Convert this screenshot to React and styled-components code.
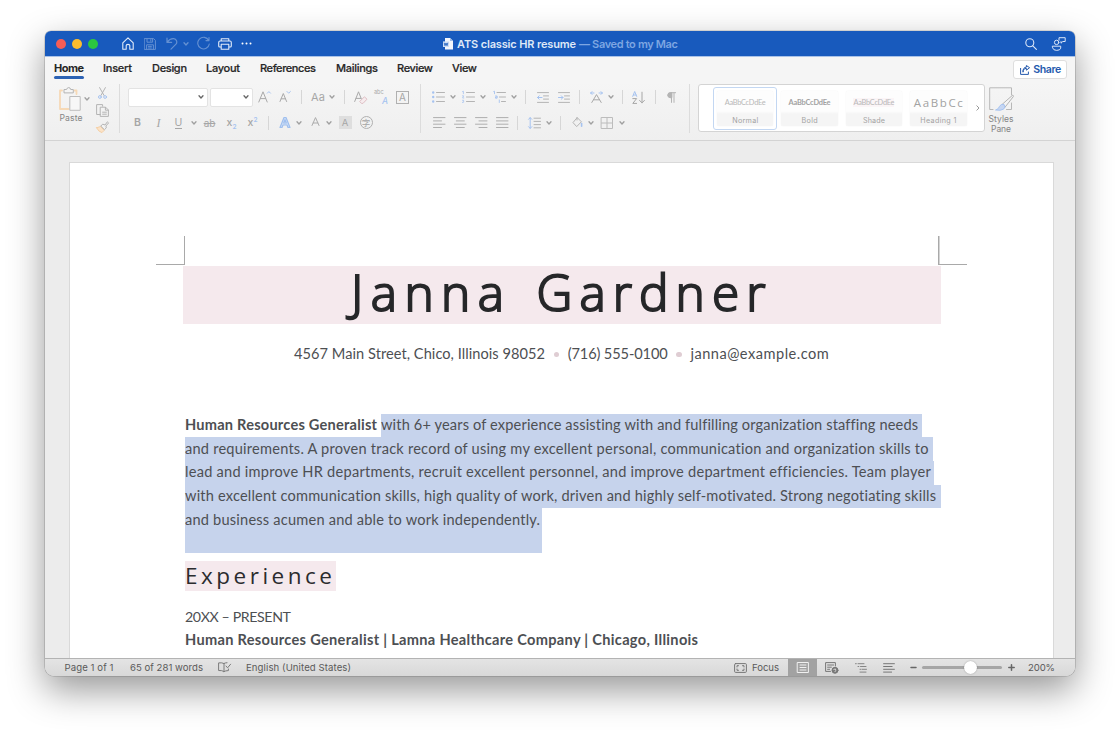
import React, { useLayoutEffect, useRef, useState } from "react";
import styled, { createGlobalStyle, css } from "styled-components";

const GRAY = "#b4b4b4";
const BLUE = "#a6c3f0";
const UI = `Inter, "Liberation Sans", sans-serif`;
const BODY = `Lato, "Liberation Sans", sans-serif`;
const HEAD = `"Open Sans", "Noto Sans", sans-serif`;

const Global = createGlobalStyle`
  *, *::before, *::after { box-sizing: border-box; }
  html, body { margin: 0; padding: 0; background: #fff; overflow: hidden; }
  svg { display: block; flex: none; overflow: visible; }
`;

/* ---------- text fitted to a column width by tracking ---------- */
const FitBox = styled.span`
  display: inline-block;
  flex: none;
  white-space: pre;
  width: ${(p) => p.$w}px;
`;

function Fit({ w, children }) {
  const ref = useRef(null);
  const [track, setTrack] = useState(0);
  useLayoutEffect(() => {
    const n = String(children).length;
    setTrack((w - ref.current.getBoundingClientRect().width) / Math.max(1, n - 1));
  }, [w, children]);
  return (
    <FitBox $w={w}>
      <span ref={ref} style={{ letterSpacing: track }}>{children}</span>
    </FitBox>
  );
}

/* ---------- window ---------- */
const Stage = styled.div`
  width: 1120px;
  height: 736px;
  padding: 31px 45px 60px;
  background: #fff;
  font-family: ${UI};
`;

const Window = styled.div`
  width: 1030px;
  height: 645px;
  display: flex;
  flex-direction: column;
  overflow: hidden;
  border-radius: 6px 6px 9px 9px;
  background: #ececec;
  box-shadow: 0 0 0 0.6px rgba(0, 0, 0, 0.22), 0 14px 36px rgba(0, 0, 0, 0.41);
`;

const TitleBar = styled.header`
  height: 25px;
  flex: none;
  display: flex;
  align-items: center;
  background: #185abd;
  color: #fff;
`;

const Lights = styled.div`
  display: flex;
  gap: 6px;
  margin-left: 10.5px;
`;

const Light = styled.i`
  width: 10px;
  height: 10px;
  border-radius: 50%;
  background: ${(p) => p.$c};
`;

const Slot = styled.span`
  flex: none;
  display: flex;
  align-items: center;
  justify-content: center;
  width: ${(p) => p.$w}px;
  margin-left: ${(p) => p.$ml || 0}px;
  ${(p) => p.$dim && css`opacity: 0.33;`}
`;

const DocTitle = styled.div`
  display: flex;
  align-items: center;
  margin-left: 191px;
  font-size: 11px;
  font-weight: 600;
  color: #dfe8f7;
  svg { margin-right: 4px; }
  em { font-style: normal; color: #7da6e2; margin-left: 3px; }
`;

/* ---------- ribbon ---------- */
const Tabs = styled.nav`
  height: 26px;
  flex: none;
  display: flex;
  align-items: flex-start;
  padding: 4px 8px 0 9px;
  background: #f5f5f5;
  border-top: 1px solid #a9c2e8;
`;

const Tab = styled.div`
  height: 18px;
  line-height: 15px;
  font-size: 11px;
  font-weight: ${(p) => (p.$on ? 700 : 500)};
  color: #262626;
  -webkit-text-stroke: ${(p) => (p.$on ? 0 : 0.2)}px #262626;
  margin-right: ${(p) => p.$mr}px;
  &::after {
    content: "";
    display: block;
    height: 2.5px;
    border-radius: 2px;
    background: ${(p) => (p.$on ? "#2c62b4" : "transparent")};
  }
`;

const ShareButton = styled.button`
  margin: -1px 0 0 auto;
  width: 54px;
  height: 19px;
  padding: 0 5px 0 6px;
  display: flex;
  align-items: center;
  justify-content: space-between;
  border: 1px solid #dedede;
  border-radius: 3px;
  background: #fff;
  color: #2459ad;
  font: 600 10.6px ${UI};
`;

const Ribbon = styled.section`
  height: 59px;
  flex: none;
  display: flex;
  background: linear-gradient(#f5f5f5, #efefef);
  border-bottom: 1px solid #d3d3d3;
`;

const Clipboard = styled.div`
  display: flex;
  width: 74px;
  padding: 5px 0 0 13px;
`;

const PasteStack = styled.div`
  width: 26px;
  display: flex;
  flex-direction: column;
  align-items: center;
  font-size: 8.6px;
  line-height: 11px;
  color: #858585;
  svg { margin: 0 2px 2px 0; }
`;

const ChevronHolder = styled.div`
  padding: 10px 0 0 0;
`;

const ToolStack = styled.div`
  display: flex;
  flex-direction: column;
  align-items: center;
  margin-left: 5px;
  width: 14px;
  gap: 4.5px;
`;

const GroupLine = styled.i`
  flex: none;
  width: 1px;
  height: 49px;
  margin-top: 2px;
  background: #dcdcdc;
`;

const Rows = styled.div`
  flex: none;
  width: ${(p) => p.$w}px;
  display: flex;
  flex-direction: column;
`;

const Row = styled.div`
  display: flex;
  align-items: center;
  height: ${(p) => p.$h}px;
`;

const Field = styled.div`
  flex: none;
  display: flex;
  align-items: center;
  justify-content: flex-end;
  width: ${(p) => p.$w}px;
  height: 19px;
  margin-left: ${(p) => p.$ml}px;
  padding-right: 3px;
  background: #fff;
  border: 1px solid #e3e3e3;
  border-radius: 2px;
`;

const Sep = styled.i`
  flex: none;
  width: 1px;
  height: 14px;
  margin-left: ${(p) => p.$ml}px;
  background: #d6d6d6;
`;

const Glyph = styled.span`
  font-family: ${(p) => p.$f || UI};
  font-size: ${(p) => p.$s || 12}px;
  font-weight: ${(p) => p.$b || 400};
  line-height: 14px;
  white-space: nowrap;
  color: ${(p) => p.$c || "#a6a6a6"};
  sub, sup { font-size: 6.5px; line-height: 0; color: ${BLUE}; font-weight: 600; }
`;

const Under = styled(Glyph)`
  border-bottom: 1px solid #a6a6a6;
  line-height: 11px;
`;

const Struck = styled(Glyph)`
  text-decoration: line-through;
`;

const Boxed = styled(Glyph)`
  width: 13px;
  height: 13px;
  line-height: 11px;
  text-align: center;
  border: 1px solid ${(p) => (p.$fill ? "transparent" : "#b0b0b0")};
  background: ${(p) => p.$fill || "transparent"};
  border-radius: ${(p) => (p.$round ? "50%" : 0)};
`;

const Gallery = styled.div`
  flex: none;
  display: flex;
  align-items: center;
  width: 287px;
  height: 48px;
  margin: 2px 0 0 8px;
  padding-left: 14px;
  background: #fff;
  border: 1px solid #d4d4d4;
  border-radius: 3px;
`;

const StyleTile = styled.div`
  flex: none;
  width: 64.4px;
  height: 43px;
  padding: 3px;
  border: 1px solid ${(p) => (p.$on ? "#c3d7f2" : "transparent")};
  border-radius: 3px;
`;

const StyleFace = styled.div`
  height: 35px;
  border-radius: 2px;
  display: flex;
  flex-direction: column;
  align-items: center;
  background: linear-gradient(#fdfdfd 0 20px, #f5f5f5 23px);
  box-shadow: 0 0 1px #e2e2e2;
  color: #a2a2a2;
`;

const Sample = styled.div`
  height: 22px;
  line-height: 23px;
  font-family: ${(p) => (p.$big ? HEAD : BODY)};
  font-size: ${(p) => (p.$big ? 11.5 : 7.4)}px;
  font-weight: ${(p) => (p.$bold ? 700 : 400)};
  color: ${(p) => (p.$faint ? "#b8b8b8" : "#a2a2a2")};
`;

const SampleMark = styled.span`
  background: ${(p) => (p.$on ? "#fbf5f7" : "transparent")};
`;

const StyleName = styled.div`
  font-size: 7.2px;
  line-height: 15px;
`;

const PaneButton = styled.div`
  width: 32px;
  padding-top: 5px;
  display: flex;
  flex-direction: column;
  align-items: center;
  font-size: 8.5px;
  line-height: 10px;
  color: #858585;
  text-align: center;
  svg { margin-bottom: 3px; }
`;

/* ---------- document ---------- */
const Desk = styled.main`
  flex: 1;
  min-height: 0;
  padding: 21px 21px 0 24px;
  overflow: hidden;
  background: #ececec;
`;

const Page = styled.article`
  height: 600px;
  padding: 73px 0 0 86px;
  background: #fff;
  border: 1px solid #d9d9d9;
  font-family: ${BODY};
  color: #4d4f53;
`;

const Marks = styled.div`
  display: flex;
  justify-content: space-between;
  width: 811px;
  height: 30px;
`;

const Mark = styled.i`
  width: 29px;
  height: 29px;
  background:
    linear-gradient(#a9a9a9, #a9a9a9) ${(p) => (p.$left ? "right" : "left")} / 1.5px 100% no-repeat,
    linear-gradient(#a9a9a9, #a9a9a9) bottom / 100% 1.5px no-repeat;
`;

const NameBand = styled.h1`
  display: flex;
  gap: 32.5px;
  width: 758px;
  height: 58px;
  margin: 0 0 0 26.5px;
  padding-left: 168.5px;
  background: #f5e9ed;
  color: #262729;
  font: 300 49.5px/53px ${HEAD};
  -webkit-text-stroke: 2px #262729;
  stroke-linejoin: round;
`;

const Contact = styled.div`
  display: flex;
  align-items: center;
  height: 22px;
  margin: 19px 0 0 138px;
  font-size: 14.6px;
  line-height: 22px;
`;

const Dot = styled.i`
  width: 5.5px;
  height: 5.5px;
  margin: 1px 8.6px 0 8.6px;
  border-radius: 50%;
  background: #dfcdd3;
`;

const Summary = styled.div`
  margin: 49px 0 0 29px;
  font-size: 14.6px;
`;

const Line = styled.div`
  display: flex;
  height: ${(p) => p.$h}px;
  line-height: ${(p) => p.$lh}px;
`;

const Strong = styled.b`
  width: 196px;
  font-weight: 700;
`;

const Marked = styled.span`
  width: ${(p) => p.$w}px;
  background: #c6d3ec;
`;

const SectionTitle = styled.h2`
  width: 151px;
  height: 30px;
  margin: 8px 0 0 29px;
  padding-left: 0;
  background: #f5e9ed;
  color: #2b2c2e;
  font: 400 22.5px/30px ${HEAD};
`;

const Entry = styled.p`
  margin: ${(p) => p.$mt}px 0 0 29px;
  height: ${(p) => (p.$bold ? 24 : 23)}px;
  font-size: ${(p) => (p.$bold ? 14.6 : 14.2)}px;
  line-height: 24px;
  font-weight: ${(p) => (p.$bold ? 700 : 400)};
`;

/* ---------- status bar ---------- */
const StatusBar = styled.footer`
  flex: none;
  height: 18px;
  display: flex;
  align-items: center;
  border-top: 1px solid #b3b3b3;
  background: linear-gradient(#e4e4e4, #d8d8d8);
  font-size: 9.6px;
  line-height: 17px;
  color: #5a5a5a;
`;

const StatusText = styled.span`
  margin-left: ${(p) => p.$ml}px;
`;

const ActiveView = styled.span`
  display: flex;
  align-items: center;
  justify-content: center;
  width: 29px;
  height: 17px;
  margin-left: 9px;
  background: #a2a2a2;
`;

const Track = styled.span`
  display: flex;
  align-items: center;
  width: 80px;
  height: 3px;
  margin-left: 5px;
  padding-left: 42px;
  border-radius: 2px;
  background: #a5a5a5;
`;

const Knob = styled.i`
  width: 13px;
  height: 13px;
  border-radius: 50%;
  background: #fff;
  box-shadow: 0 0 1.5px rgba(0, 0, 0, 0.35);
`;

/* ---------- icons ---------- */
const Ico = ({ w, h, c = GRAY, sw = 1, children }) => (
  <svg width={w} height={h} viewBox={`0 0 ${w} ${h}`} fill="none" stroke={c} strokeWidth={sw} strokeLinecap="round" strokeLinejoin="round">
    {children}
  </svg>
);
const Chev = ({ c = "#a0a0a0" }) => (
  <Ico w={6} h={4} c={c} sw={1.3}><path d="M1 .8 3 3 5 .8" /></Ico>
);
const Drop = ({ ml }) => <Slot $w={6} $ml={ml}><Chev /></Slot>;

const HomeIcon = () => <Ico w={12} h={13} c="#e3ecf9" sw={1.1}><path d="M.8 5.8 6 .8l5.2 5v6.4H7.8V8.6Q7.8 7.4 6 7.4T4.2 8.6v3.6H.8Z" /></Ico>;
const SaveIcon = () => <Ico w={12} h={12} c="#fff"><path d="M.6.6h9l1.8 1.8v9H.6ZM3 .8v3.4h5.6V.8M2.6 11.2V6.8h6.8v4.4M6.8 1.6v1.6M4.4 8.4h3M4.4 10h3" /></Ico>;
const UndoIcon = () => <Ico w={12} h={13} c="#fff" sw={1.2}><path d="M1 1v4.4h4.6M1.2 5.2C3 2.600 5 1.400 7.600 1.600c3 .4 4 3.600 2.400 5.600L5 12.200" /></Ico>;
const RedoIcon = () => <Ico w={13} h={13} c="#fff" sw={1.1}><path d="M9 3.600h3V.6M11.700 3.400A5.800 5.800 0 1 0 12.300 7" /></Ico>;
const PrintIcon = () => <Ico w={14} h={12} c="#e3ecf9" sw={1.100}><path d="M3.200 3V.7h7.600V3M3 9H1.800Q.7 9 .7 8V4.400Q.7 3 2 3h10q1.300 0 1.300 1.400V8q0 1-1.100 1H11M3.200 6.200h7.600v5.100H3.200Z" /></Ico>;
const SearchIcon = () => <Ico w={12} h={12} c="#dbe6f8" sw={1.100}><circle cx="4.800" cy="4.800" r="4" /><path d="m7.800 7.800 3.600 3.600" /></Ico>;
const PeopleIcon = () => (
  <Ico w={14} h={14} c="#dbe6f8"><circle cx="4.600" cy="5.400" r="2.200" /><path d="M.7 9.200h8v2q-.6 2.200-4 2.200t-4-2.200ZM7 3.200V.7h6.200v3.800h-2.400L9 6.200V4.600" /></Ico>
);
const WordIcon = () => (
  <svg width="10" height="12" viewBox="0 0 10 12"><path d="M2 0h5l3 3v8.500H2Z" fill="#f2f6fc" /><path d="M7 0v3h3" fill="#9dbbe6" /><rect x="0" y="3.400" width="6" height="5.600" fill="#cfdff5" /><path d="m1.200 4.800.8 2.900 1-2.700 1 2.700.8-2.900" fill="none" stroke="#185abd" strokeWidth=".8" /></svg>
);
const ShareIcon = () => <Ico w={10} h={10} c="#2459ad"><path d="M.6 3.400v6h7.800V7M3 6.800C3 4.400 4.400 3.400 6.400 3.400V5.200L9.600 2.700 6.400.5v1.600C4 2.200 2.800 4 3 6.800Z" /></Ico>;

const PasteIcon = () => (
  <Ico w={22} h={24}>
    <path d="M3 3.500H1v18.500h8.500M15.500 3.500h2V7" stroke="#f6d9b6" strokeWidth="1.800" />
    <path d="M5 5.500v-3h2.600Q8 .6 9.700.6t2 1.900h2.600v3Z" fill="#f5f5f5" />
    <path d="M11.200 9.500h10v13.800h-10Z" fill="#f7f7f7" stroke="#bdbdbd" />
  </Ico>
);
const CutIcon = () => <Ico w={9} h={12}><path d="M1.600.6 6 8.400M7.400.6 3 8.400" /><circle cx="1.900" cy="10" r="1.400" stroke={BLUE} /><circle cx="7.100" cy="10" r="1.400" stroke={BLUE} /></Ico>;
const CopyIcon = () => <Ico w={13} h={13}><path d="M4.400 10.500H.6V.6h6v1.600M4.600 3.200h5l2.800 2.800v6.400H4.600ZM9.400 3.400v2.800h2.800M6.600 8.200h3.800M6.600 10.200h3.800" /></Ico>;
const BrushIcon = () => (
  <Ico w={13} h={12}><path d="m.6 6.800 4-1.300 3.600 3.800L6 11.600Q2.600 11 .6 6.800Z" fill="#fbe3c8" stroke="#f5d0a6" /><path d="m5 4.800 1.800-1.600L9 4l2.400-3.200 1.200 1.100L9.900 5l.4 1.900L8.700 8.400Z" fill="#f2f2f2" /></Ico>
);
const GrowIcon = ({ s, down }) => (
  <Ico w={13} h={14}><path d={s ? "M1 11.500 4.300 3.500l3.300 8M2.200 8.800h4.200" : "M.8 12 5 1.800 9.200 12M2.400 8.600h5.200"} stroke="#a9a9a9" /><path d={down ? "m8 1.500 1.700 1.700 1.700-1.700" : "m9.300 3.200 1.600-1.600 1.600 1.600"} stroke={BLUE} /></Ico>
);
const EraseIcon = () => <Ico w={14} h={13}><path d="M.7 10.500 4.500.8l2.900 7.200M2 7.400h4.600" stroke="#a9a9a9" /><path d="m6 10.200 4.400-4.400 2.600 2.400-4 4.200H7.800Z" stroke="#dfbfc4" fill="#f6ecee" /></Ico>;
const BulletIcon = () => (
  <Ico w={13} h={12}><path d="M4.500 1.500h8M4.500 6h8M4.500 10.500h8" /><path d="M1.200 1.500h.01M1.200 6h.01M1.200 10.500h.01" stroke={BLUE} strokeWidth="2.400" /></Ico>
);
const NumberIcon = () => (
  <Ico w={13} h={12}><path d="M4.500 1.500h8M4.500 6h8M4.500 10.500h8" /><path d="M.6.5l.8-.3v2.500M.5 4.800h1.200L.6 7h1.200M.5 9.300h1.200l-.6 1 .7.300-.5.900H.5" stroke={BLUE} strokeWidth=".8" /></Ico>
);
const MultiIcon = () => (
  <Ico w={13} h={12}><path d="M4 1.500h8.500M6.500 6h6M8.500 10.500h4" /><path d="M.7.5l.8-.3v2.500M2.500 5h1.600v2.200H2.500V6h1.400M6.300 9v2.500" stroke={BLUE} strokeWidth=".9" /></Ico>
);
const IndentIcon = ({ right }) => (
  <Ico w={12} h={11}><path d="M.5.6h11M6.500 3.900h5M6.500 7.100h5M.5 10.400h11" /><path d={right ? "M.5 5.500H5M3.300 3.800 5 5.500 3.300 7.200" : "M5 5.500H.5M2.200 3.800.5 5.500l1.700 1.700"} stroke={BLUE} /></Ico>
);
const DirIcon = () => <Ico w={13} h={12}><path d="M1.800 11.500 6.500 3.600l4.700 7.900M3.600 8.800h5.800" stroke="#a9a9a9" /><path d="M4 2H.6M2 .6.6 2 2 3.400M9 2h3.400M11 .6 12.400 2 11 3.400" stroke={BLUE} /></Ico>;
const SortIcon = () => (
  <Ico w={13} h={13}><path d="M.7 5.400 2.700.5l2 4.900M1.400 4h2.600" stroke={BLUE} /><path d="M.8 7.600h3.800L.8 12.400h3.800M10 1.200v10.600M7.600 9.400l2.400 2.500 2.400-2.500" stroke="#a6a6a6" /></Ico>
);
const PilcrowIcon = () => <Ico w={9} h={11}><path d="M4.500.8v9.600M7 .8v9.600M8.600.7H3.400a2.400 2.400 0 0 0 0 4.900h1" /><path d="M4.500.7H3.300a2.300 2.300 0 0 0 0 4.900h1.200Z" fill={GRAY} /></Ico>;
const AlignIcon = ({ kind }) => {
  const d = {
    left: "M.5.6h11.500M.5 3.900h8M.5 7.200h11.500M.5 10.500h8",
    center: "M.5.6H12M2.300 3.900h8M.5 7.200H12M2.300 10.500h8",
    right: "M.5.6H12M4 3.900h8M.5 7.200H12M4 10.500h8",
    full: "M.5.6H12M.5 3.900H12M.5 7.200H12M.5 10.500H12",
  }[kind];
  return <Ico w={12} h={11} c="#aeaeae"><path d={d} /></Ico>;
};
const SpacingIcon = () => <Ico w={13} h={12}><path d="M6 1.200h6.500M6 4.400h6.500M6 7.600h6.500M6 10.800h6.500" /><path d="M2.200.7v10.600M.6 2.300 2.200.6l1.600 1.700M.6 9.700l1.600 1.700 1.600-1.700" stroke={BLUE} /></Ico>;
const BucketIcon = () => <Ico w={11} h={11}><path d="M5 .8 1 5.600l3.700 4 4.700-4.800L5.600 1M5 3V.6" /><path d="M9.600 6.600v2.600" stroke={BLUE} strokeWidth="1.600" /></Ico>;
const BorderIcon = () => <Ico w={12} h={12} c="#bcbcbc"><path d="M.5.5h11v11H.5ZM6 .5v11M.5 6h11" /></Ico>;
const PaneIcon = () => (
  <Ico w={25} h={24}><path d="M4 22.500H.7V.8h21.800v7M22.500 16v6.500h-5" stroke="#b8b8b8" /><path d="M13 17.500 23.800 8l.6 1.500-8.600 11Z" fill="#f4f4f4" /><path d="M7 23q2.600-.8 3.500-3.600 1.500-3 4.600-1.800 2 2.600-.6 4.600-3 1.800-7.500.8Z" fill="#c6d6f2" stroke={BLUE} /></Ico>
);
const BookIcon = () => <Ico w={13} h={11} c="#7b7b7b"><path d="M6 1.500Q4 .4.600.9v7.600Q4 8.200 6 9.600V1.500Q7 .8 9 .7M6 9.600q1.500-1 4.400-1V7M8 4l1.600 1.800 3-3.600" /></Ico>;
const FocusIcon = () => <Ico w={13} h={10} c="#777"><rect x=".6" y=".6" width="11.800" height="8.800" rx="1" /><path d="M3 4V2.700h1.500M10 4V2.700H8.500M3 6v1.300h1.500M10 6v1.300H8.500" /></Ico>;
const PrintViewIcon = () => <Ico w={12} h={11} c="#f0f0f0"><rect x=".6" y=".5" width="10.800" height="10" /><path d="M3 3h6M3 5.500h6M3 8h6" /></Ico>;
const WebViewIcon = () => <Ico w={14} h={12} c="#777"><path d="M5.500 9.400H.6V.6h9.800V4M2.600 3h6M2.600 5.200h3.800M2.600 7.300h2" /><circle cx="10" cy="8.300" r="3" fill="#777" /><path d="M8.800 7.500l1.600-.6.400 1.400-.8 1.400" stroke="#ddd" strokeWidth=".9" /></Ico>;
const OutlineIcon = () => <Ico w={12} h={10} c="#858585"><path d="M.5.700h.8M3 .7h6M3 3.500h.8M5.500 3.500H11M5 6.300h.8M7 6.300h4.500M5 9.100h6" /></Ico>;
const DraftIcon = () => <Ico w={12} h={10} c="#777"><path d="M.6.700h10.800M.6 3.500h8.500M.6 6.300h10.800M.6 9.100h8" /></Ico>;

const tabs = [
  ["Home", 30, 19], ["Insert", 29, 20], ["Design", 35, 19], ["Layout", 34, 20],
  ["References", 56, 20], ["Mailings", 42, 19], ["Review", 36, 19], ["View", 25, 0],
];

const summary = [
  ["and requirements. A proven track record of using my excellent personal, communication and organization skills to", 744, 748, 24, 23],
  ["lead and improve HR departments, recruit excellent personnel, and improve department efficiencies. Team player", 745, 749, 24, 21],
  ["with excellent communication skills, high quality of work, driven and highly self-motivated. Strong negotiating skills", 752, 755.5, 23, 21],
  ["and business acumen and able to work independently.", 355, 356.5, 45, 23],
];

export default function App() {
  return (
    <Stage>
      <Global />
      <Window>
        <TitleBar>
          <Lights><Light $c="#f65d56" /><Light $c="#fbbd2e" /><Light $c="#2bc840" /></Lights>
          <Slot $w={12} $ml={24.500}><HomeIcon /></Slot>
          <Slot $w={12} $ml={10} $dim><SaveIcon /></Slot>
          <Slot $w={12} $ml={10} $dim><UndoIcon /></Slot>
          <Slot $w={6} $ml={5} $dim><Chev c="#fff" /></Slot>
          <Slot $w={13} $ml={8} $dim><RedoIcon /></Slot>
          <Slot $w={14} $ml={8}><PrintIcon /></Slot>
          <Slot $w={11} $ml={9}><Ico w={11} h={3} c="#fff" sw={2}><path d="M1.500 1.500h.01M5.500 1.500h.01M9.500 1.500h.01" /></Ico></Slot>
          <DocTitle>
            <WordIcon />
            <Fit w={119}>ATS classic HR resume</Fit>
            <em><Fit w={99}>— Saved to my Mac</Fit></em>
          </DocTitle>
          <Slot $w={12} $ml={347}><SearchIcon /></Slot>
          <Slot $w={14} $ml={15}><PeopleIcon /></Slot>
        </TitleBar>

        <Tabs>
          {tabs.map(([name, w, mr], i) => (
            <Tab key={name} $on={i === 0} $mr={mr}><Fit w={w}>{name}</Fit></Tab>
          ))}
          <ShareButton><ShareIcon /><Fit w={28}>Share</Fit></ShareButton>
        </Tabs>

        <Ribbon>
          <Clipboard>
            <PasteStack><PasteIcon /><Fit w={23}>Paste</Fit></PasteStack>
            <ChevronHolder><Chev /></ChevronHolder>
            <ToolStack><CutIcon /><CopyIcon /><BrushIcon /></ToolStack>
          </Clipboard>
          <GroupLine />
          <Rows $w={300}>
            <Row $h={30}>
              <Field $w={80} $ml={8}><Chev c="#666" /></Field>
              <Field $w={43} $ml={2}><Chev c="#666" /></Field>
              <Slot $w={13} $ml={5}><GrowIcon /></Slot>
              <Slot $w={13} $ml={8}><GrowIcon s down /></Slot>
              <Sep $ml={9} />
              <Slot $w={14} $ml={9}><Glyph $s={11}>Aa</Glyph></Slot>
              <Drop ml={4} />
              <Sep $ml={9} />
              <Slot $w={14} $ml={9}><EraseIcon /></Slot>
              <Slot $w={14} $ml={7}>
                <svg width="14" height="14" viewBox="0 0 14 14"><text x="-1" y="3.600" fontSize="5.500" fontFamily="Inter" fill="#a8a8a8">abc</text><text x="7" y="14" fontSize="8.500" fontWeight="500" fontStyle="italic" fontFamily="Inter" fill={BLUE}>A</text></svg>
              </Slot>
              <Slot $w={13} $ml={7}><Boxed $s={10}>A</Boxed></Slot>
            </Row>
            <Row $h={21}>
              <Slot $w={8} $ml={13.500}><Glyph $s={10.500} $b={600}>B</Glyph></Slot>
              <Slot $w={8} $ml={13}><Glyph $s={12} $f={`"Liberation Serif", serif`}><i>I</i></Glyph></Slot>
              <Slot $w={8} $ml={12}><Under $s={10.500}>U</Under></Slot>
              <Drop ml={8} />
              <Slot $w={12} $ml={7}><Struck $s={10}>ab</Struck></Slot>
              <Slot $w={10} $ml={11}><Glyph $s={10.500} $b={500}>x<sub>2</sub></Glyph></Slot>
              <Slot $w={10} $ml={11}><Glyph $s={10.500} $b={500}>x<sup>2</sup></Glyph></Slot>
              <Sep $ml={10} />
              <Slot $w={12} $ml={10}>
                <svg width="12" height="13" viewBox="0 0 12 13"><path d="M1 11.500 5 1.500h2l4 10H9L8 9H4l-1 2.500ZM4.700 7h2.600L6 3.600Z" fill="#cfdff7" stroke="#9fbfee" strokeWidth="1.200" strokeLinejoin="round" /></svg>
              </Slot>
              <Drop ml={5} />
              <Slot $w={9} $ml={9}><Ico w={9} h={12} c="#ababab"><path d="M1 8.500 4.500.6 8 8.500M2.200 6h4.600" /></Ico></Slot>
              <Drop ml={6} />
              <Slot $w={13} $ml={7}><Boxed $s={9.500} $fill="#dedede">A</Boxed></Slot>
              <Slot $w={13} $ml={8}><Boxed $s={8.500} $round $f={`"Noto Sans CJK SC", sans-serif`}>字</Boxed></Slot>
            </Row>
          </Rows>
          <GroupLine />
          <Rows $w={268}>
            <Row $h={30}>
              <Slot $w={13} $ml={11}><BulletIcon /></Slot><Drop ml={5} />
              <Slot $w={13} $ml={6}><NumberIcon /></Slot><Drop ml={5} />
              <Slot $w={13} $ml={7}><MultiIcon /></Slot><Drop ml={5} />
              <Sep $ml={8} />
              <Slot $w={12} $ml={11}><IndentIcon /></Slot>
              <Slot $w={12} $ml={9}><IndentIcon right /></Slot>
              <Sep $ml={9} />
              <Slot $w={13} $ml={10}><DirIcon /></Slot><Drop ml={5} />
              <Sep $ml={8} />
              <Slot $w={13} $ml={9}><SortIcon /></Slot>
              <Sep $ml={10} />
              <Slot $w={9} $ml={11}><PilcrowIcon /></Slot>
            </Row>
            <Row $h={21}>
              <Slot $w={12} $ml={11.500}><AlignIcon kind="left" /></Slot>
              <Slot $w={12} $ml={9}><AlignIcon kind="center" /></Slot>
              <Slot $w={12} $ml={9}><AlignIcon kind="right" /></Slot>
              <Slot $w={12} $ml={9}><AlignIcon kind="full" /></Slot>
              <Sep $ml={9.500} />
              <Slot $w={13} $ml={10}><SpacingIcon /></Slot><Drop ml={5} />
              <Sep $ml={8} />
              <Slot $w={11} $ml={11}><BucketIcon /></Slot><Drop ml={5} />
              <Slot $w={12} $ml={7}><BorderIcon /></Slot><Drop ml={6} />
            </Row>
          </Rows>
          <GroupLine />
          <Gallery>
            <StyleTile $on><StyleFace><Sample $faint><Fit w={41}>AaBbCcDdEe</Fit></Sample><StyleName><Fit w={26}>Normal</Fit></StyleName></StyleFace></StyleTile>
            <StyleTile><StyleFace><Sample $bold><Fit w={42}>AaBbCcDdEe</Fit></Sample><StyleName><Fit w={16}>Bold</Fit></StyleName></StyleFace></StyleTile>
            <StyleTile><StyleFace><Sample $faint><SampleMark $on><Fit w={41}>AaBbCcDdEe</Fit></SampleMark></Sample><StyleName><Fit w={22}>Shade</Fit></StyleName></StyleFace></StyleTile>
            <StyleTile><StyleFace><Sample $big><Fit w={49}>AaBbCc</Fit></Sample><StyleName><Fit w={36}>Heading 1</Fit></StyleName></StyleFace></StyleTile>
            <Slot $w={4} $ml={5}><Ico w={4} h={6} c="#999"><path d="M.8.8 3 3 .8 5.200" /></Ico></Slot>
          </Gallery>
          <PaneButton><PaneIcon /><Fit w={25}>Styles</Fit><Fit w={20}>Pane</Fit></PaneButton>
        </Ribbon>

        <Desk>
          <Page>
            <Marks><Mark $left /><Mark /></Marks>
            <NameBand><Fit w={153}>Janna</Fit><Fit w={229}>Gardner</Fit></NameBand>
            <Contact>
              <Fit w={251}>4567 Main Street, Chico, Illinois 98052</Fit>
              <Dot />
              <Fit w={100}>(716) 555-0100</Fit>
              <Dot />
              <Fit w={138.500}>janna@example.com</Fit>
            </Contact>
            <Summary>
              <Line $h={23} $lh={21}>
                <Strong><Fit w={192}>Human Resources Generalist</Fit></Strong>
                <Marked $w={541}><Fit w={536.500}>with 6+ years of experience assisting with and fulfilling organization staffing needs</Fit></Marked>
              </Line>
              {summary.map(([text, w, box, h, lh]) => (
                <Line key={text} $h={h} $lh={lh}><Marked $w={box}><Fit w={w}>{text}</Fit></Marked></Line>
              ))}
            </Summary>
            <SectionTitle><Fit w={147}>Experience</Fit></SectionTitle>
            <Entry $mt={14}><Fit w={106}>20XX – PRESENT</Fit></Entry>
            <Entry $mt={0} $bold><Fit w={513}>Human Resources Generalist | Lamna Healthcare Company | Chicago, Illinois</Fit></Entry>
          </Page>
        </Desk>

        <StatusBar>
          <StatusText $ml={19.500}><Fit w={49}>Page 1 of 1</Fit></StatusText>
          <StatusText $ml={16.500}><Fit w={73}>65 of 281 words</Fit></StatusText>
          <Slot $w={13} $ml={15}><BookIcon /></Slot>
          <StatusText $ml={15}><Fit w={105}>English (United States)</Fit></StatusText>
          <Slot $w={13} $ml={383}><FocusIcon /></Slot>
          <StatusText $ml={5}><Fit w={27}>Focus</Fit></StatusText>
          <ActiveView><PrintViewIcon /></ActiveView>
          <Slot $w={14} $ml={8}><WebViewIcon /></Slot>
          <Slot $w={12} $ml={16}><OutlineIcon /></Slot>
          <Slot $w={12} $ml={16}><DraftIcon /></Slot>
          <Slot $w={7} $ml={15}><Ico w={7} h={7} c="#666" sw={1.500}><path d="M1 3.500h5" /></Ico></Slot>
          <Track><Knob /></Track>
          <Slot $w={7} $ml={6}><Ico w={7} h={7} c="#666" sw={1.500}><path d="M.8 3.500h5.400M3.500.8v5.400" /></Ico></Slot>
          <StatusText $ml={13}><Fit w={27}>200%</Fit></StatusText>
        </StatusBar>
      </Window>
    </Stage>
  );
}
